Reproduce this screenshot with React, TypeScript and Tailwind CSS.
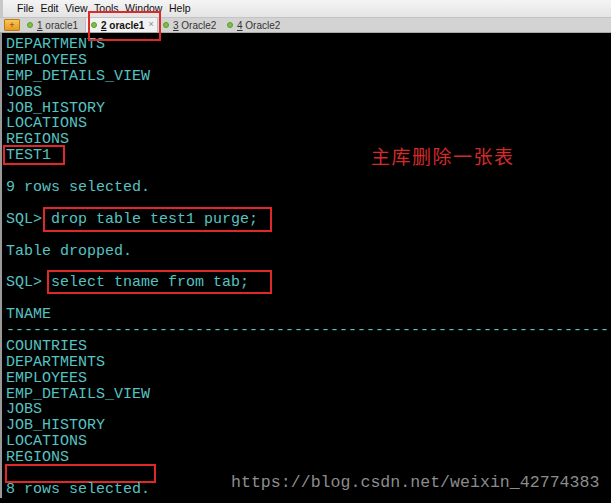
import React from 'react';

const mono = { fontFamily: '"Liberation Mono", "Courier New", monospace' };

type Box = { left: number; width: number; top: number; height: number };

const lines: { text: string; box?: Box }[] = [
  { text: 'DEPARTMENTS' },
  { text: 'EMPLOYEES' },
  { text: 'EMP_DETAILS_VIEW' },
  { text: 'JOBS' },
  { text: 'JOB_HISTORY' },
  { text: 'LOCATIONS' },
  { text: 'REGIONS' },
  { text: 'TEST1', box: { left: -3, width: 62, top: -3, height: 20 } },
  { text: '' },
  { text: '9 rows selected.' },
  { text: '' },
  { text: 'SQL> drop table test1 purge;', box: { left: 37, width: 229, top: -5, height: 25 } },
  { text: '' },
  { text: 'Table dropped.' },
  { text: '' },
  { text: 'SQL> select tname from tab;', box: { left: 41, width: 225, top: -5, height: 24 } },
  { text: '' },
  { text: 'TNAME' },
  { text: '-'.repeat(67) },
  { text: 'COUNTRIES' },
  { text: 'DEPARTMENTS' },
  { text: 'EMPLOYEES' },
  { text: 'EMP_DETAILS_VIEW' },
  { text: 'JOBS' },
  { text: 'JOB_HISTORY' },
  { text: 'LOCATIONS' },
  { text: 'REGIONS' },
  { text: '', box: { left: -1, width: 151, top: -2, height: 19 } },
  { text: '8 rows selected.' },
];

const menu = ['File', 'Edit', 'View', 'Tools', 'Window', 'Help'];

function Tab({ n, label, active, w }: { n: string; label: string; active?: boolean; w: string }) {
  return (
    <div
      className={
        'flex shrink-0 items-center gap-[4px] h-full px-[5px] whitespace-nowrap ' +
        w +
        (active ? ' bg-[#f2f2f2] border-x border-[#bdbdbd] font-bold text-[#111]' : ' text-[#333]')
      }
    >
      <span className="shrink-0 w-[6px] h-[6px] rounded-full bg-[#7cc242] border border-[#5a9a2a]" />
      <span>
        <span className="underline">{n}</span> {label}
      </span>
      {active && <span className="ml-auto text-[9px] text-[#888] font-normal">×</span>}
    </div>
  );
}

export default function App() {
  return (
    <div
      className="relative w-[611px] h-[503px] overflow-hidden bg-black"
      style={{ fontFamily: '"Liberation Sans", Arial, sans-serif' }}
    >
      {/* menu bar */}
      <div className="h-[17px] flex items-center gap-[6.5px] pl-[14px] text-[10.5px] text-[#111] bg-gradient-to-b from-[#f4f4f4] to-[#e4e4e4] border-l-[3px] border-[#c8c8c8]">
        {menu.map((m) => (
          <span key={m}>{m}</span>
        ))}
      </div>

      {/* tab bar */}
      <div className="h-[16px] flex items-stretch text-[10px] bg-[#d3d3d3] border-t border-[#c4c4c4] border-b border-b-[#a8a8a8]">
        <div className="w-[16px] ml-[4px] my-[1px] bg-gradient-to-b from-[#f8c75a] to-[#e59a1b] border border-[#c07a10] rounded-[1px] flex items-center justify-center text-[9px] text-[#7a3c00] leading-none">
          +
        </div>
        <div className="w-[2px]" />
        <Tab n="1" label="oracle1" w="w-[63px]" />
        <Tab n="2" label="oracle1" active w="w-[73px]" />
        <Tab n="3" label="Oracle2" w="w-[64px]" />
        <Tab n="4" label="Oracle2" w="w-[64px]" />
      </div>

      {/* terminal */}
      <div className="relative border-l-[2px] border-[#9a9a9a] pt-[4px] pl-[4px] text-[15px] leading-[15.9px] text-[#56c2c2] whitespace-pre" style={mono}>
        {lines.map((l, i) => (
          <div key={i} className="relative h-[15.9px]">
            {l.text}
            {l.box && (
              <div
                className="absolute border-2 border-[#e02828]"
                style={{ left: l.box.left, width: l.box.width, top: l.box.top, height: l.box.height }}
              />
            )}
          </div>
        ))}

        <div
          className="absolute left-[369px] top-[115px] text-[19px] text-[#d42a2a] tracking-[1.5px]"
          style={{ fontFamily: '"Noto Sans CJK SC", sans-serif' }}
        >
          主库删除一张表
        </div>

        <div
          className="absolute left-[229px] top-[442px] text-[16.6px] text-[#8c8c8c]"
          style={mono}
        >
          https://blog.csdn.net/weixin_42774383
        </div>
      </div>

      {/* red box around active tab */}
      <div className="absolute left-[88px] top-[11px] w-[73px] h-[30px] border-2 border-[#e02828]" />
    </div>
  );
}
